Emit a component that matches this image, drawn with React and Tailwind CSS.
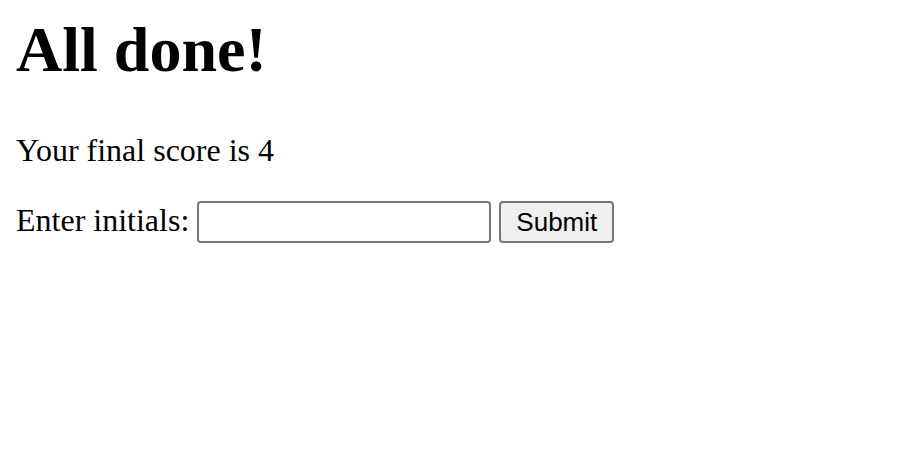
export default function App() {
  return (
    <div className="min-h-[474px] bg-white px-[16px] font-['Liberation_Serif',serif] text-black">
      <h1 className="pt-[13px] text-[64px] font-bold leading-[74px]">All done!</h1>
      <p className="mt-[45px] text-[32px] leading-[37px]">Your final score is 4</p>
      <div className="mt-[31px] flex items-start">
        <label className="mt-[2px] text-[32px] leading-[37px]">Enter initials:</label>
        <input
          type="text"
          className="ml-[8px] mt-[1px] h-[42px] w-[294px] rounded-[4px] border-2 border-[#767676] bg-white px-[4px] outline-none"
        />
        <button className="ml-[8px] mt-[1px] flex h-[42px] w-[115px] items-center justify-center rounded-[4px] border-2 border-[#767676] bg-[#efefef] font-['Liberation_Sans',sans-serif] text-[26px] leading-none text-black">
          Submit
        </button>
      </div>
    </div>
  );
}
